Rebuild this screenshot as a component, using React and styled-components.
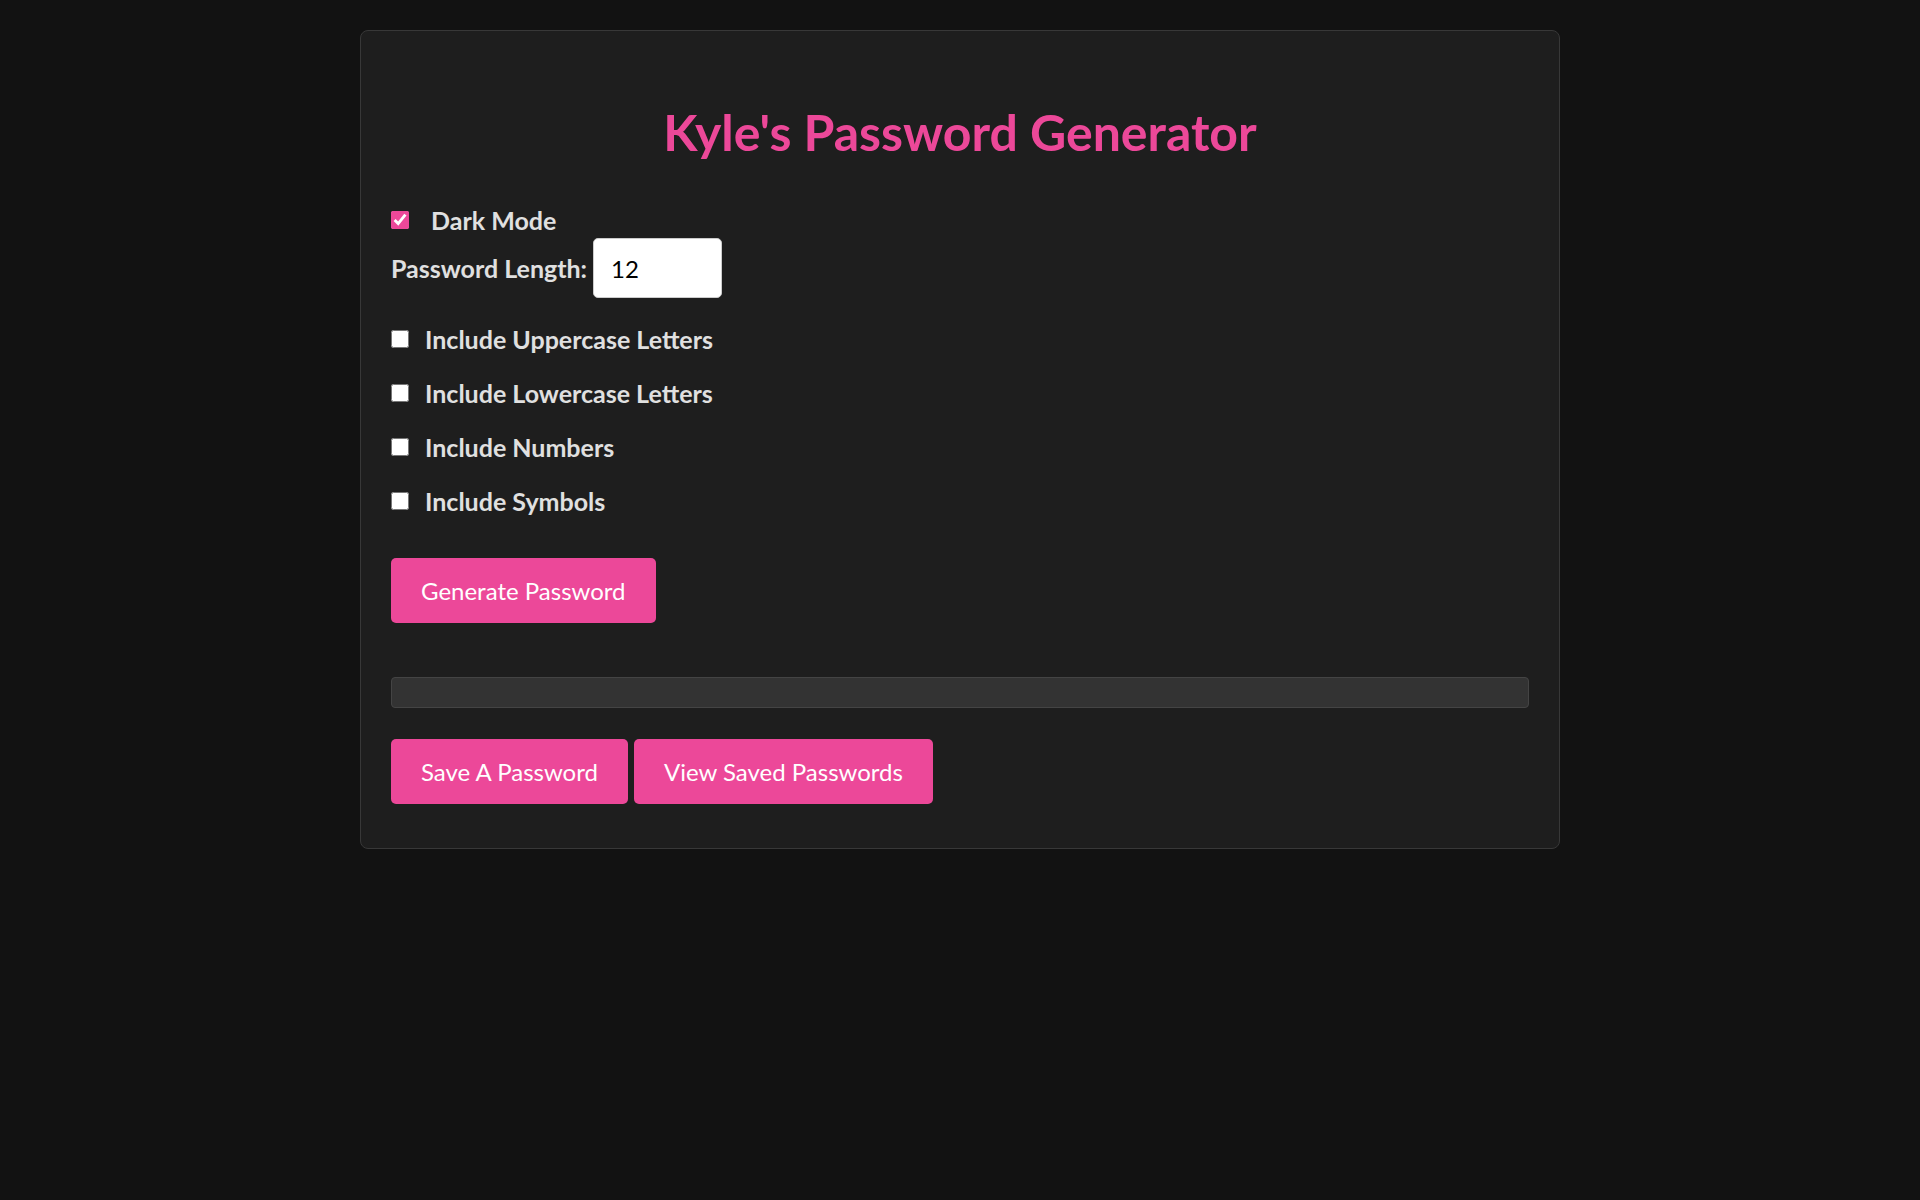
import React from 'react';
import styled, { createGlobalStyle } from 'styled-components';

const GlobalStyle = createGlobalStyle`
  html, body {
    margin: 0;
    padding: 0;
    background: #121212;
    font-family: Lato, "Open Sans", "Liberation Sans", sans-serif;
    color: #e0e0e0;
  }
`;

const Page = styled.div`
  padding-top: 30px;
  min-height: 1170px;
`;

const Card = styled.div`
  width: 1200px;
  box-sizing: border-box;
  margin: 0 auto;
  background: #1e1e1e;
  border: 1px solid #383838;
  border-radius: 8px;
  padding: 30px 30px 29px;
  display: flex;
  flex-direction: column;
`;

const Title = styled.h1`
  margin: 42px 0 43px;
  font-size: 50px;
  line-height: 58px;
  font-weight: 700;
  color: #ec4899;
  text-align: center;
`;

const CheckRow = styled.label`
  display: flex;
  align-items: center;
  height: 32px;
  font-size: 25px;
  font-weight: 700;
  color: #e0e0e0;
  margin-top: ${p => p.$top || 0}px;
  cursor: pointer;
`;

const Check = styled.input.attrs({type: 'checkbox'})`
  width: 18px;
  height: 18px;
  margin: 0 ${p => p.$gap || 16}px 0 0;
  accent-color: #ec4899;
`;

const LengthRow = styled.div`
  display: flex;
  align-items: center;
  margin-top: 2px;
`;

const LengthLabel = styled.label`
  font-size: 25px;
  font-weight: 700;
  color: #e0e0e0;
`;

const LengthInput = styled.input.attrs({type: 'number'})`
  width: 129px;
  height: 60px;
  box-sizing: border-box;
  margin-left: 6px;
  padding: 0 0 0 17px;
  border: 1px solid #ccc;
  border-radius: 5px;
  background: #fff;
  color: #000;
  font-family: inherit;
  font-size: 24px;
  -moz-appearance: textfield;
  &::-webkit-inner-spin-button,
  &::-webkit-outer-spin-button {
    -webkit-appearance: none;
    margin: 0;
  }
`;

const Button = styled.button.attrs({type: 'button'})`
  padding: 16px 30px;
  border: none;
  border-radius: 5px;
  background: #ec4899;
  color: #fff;
  font-family: inherit;
  font-size: 24px;
  line-height: 33px;
  cursor: pointer;
`;

const GenerateWrap = styled.div`
  margin-top: 41px;
`;

const Output = styled.div`
  margin-top: 54px;
  height: 31px;
  box-sizing: border-box;
  background: #333;
  border: 1px solid #444;
  border-radius: 4px;
  font-size: 20px;
  color: #e0e0e0;
  padding: 0 10px;
`;

const ButtonRow = styled.div`
  display: flex;
  gap: 6px;
  margin-top: 31px;
  margin-bottom: 15px;
`;

const options = [
  {key: 'upper', label: 'Include Uppercase Letters'},
  {key: 'lower', label: 'Include Lowercase Letters'},
  {key: 'numbers', label: 'Include Numbers'},
  {key: 'symbols', label: 'Include Symbols'},
];

export default function App() {
    const [dark, setDark] = React.useState(true);
    const [length, setLength] = React.useState(12);
    const [opts, setOpts] = React.useState({upper: false, lower: false, numbers: false, symbols: false});
    const [password, setPassword] = React.useState('');

    const generate = () => {
        let chars = '';
        if (opts.upper) chars += 'ABCDEFGHIJKLMNOPQRSTUVWXYZ';
        if (opts.lower) chars += 'abcdefghijklmnopqrstuvwxyz';
        if (opts.numbers) chars += '0123456789';
        if (opts.symbols) chars += '!@#$%^&*()_+-=';
        if (!chars) return setPassword('');
        let out = '';
        for (let i = 0; i < length; i++) out += chars[Math.floor(Math.random() * chars.length)];
        setPassword(out);
    };

    return (
        <Page>
            <GlobalStyle />
            <Card>
                <Title>Kyle's Password Generator</Title>
                <CheckRow>
                    <Check $gap={22} checked={dark} onChange={e => setDark(e.target.checked)} />
                    Dark Mode
                </CheckRow>
                <LengthRow>
                    <LengthLabel htmlFor="length">Password Length:</LengthLabel>
                    <LengthInput id="length" value={length} onChange={e => setLength(e.target.value)} />
                </LengthRow>
                {options.map(({key, label}, i) => (
                    <CheckRow key={key} $top={i === 0 ? 25 : 22}>
                        <Check checked={opts[key]} onChange={e => setOpts({...opts, [key]: e.target.checked})} />
                        {label}
                    </CheckRow>
                ))}
                <GenerateWrap>
                    <Button onClick={generate}>Generate Password</Button>
                </GenerateWrap>
                <Output>{password}</Output>
                <ButtonRow>
                    <Button>Save A Password</Button>
                    <Button>View Saved Passwords</Button>
                </ButtonRow>
            </Card>
        </Page>
    );
}
